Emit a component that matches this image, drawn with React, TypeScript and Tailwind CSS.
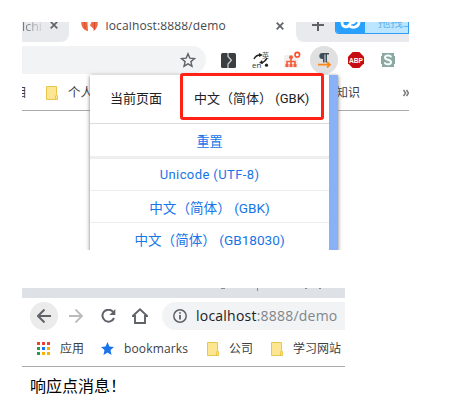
import type { ReactNode } from 'react';

const UI = "font-['Open_Sans','Noto_Sans_CJK_SC',sans-serif]";

function Folder() {
  return (
    <svg className="block shrink-0" width="12" height="14" viewBox="0 0 12 14">
      <path d="M.5.5h10v9h1v4H.5z" fill="#fee591" stroke="#e9c74e" />
      <path d="M9.5 9.5v3.5" stroke="#e9c74e" fill="none" />
    </svg>
  );
}

function Close({ className = '' }: { className?: string }) {
  return (
    <svg className={`block shrink-0 ${className}`} width="8" height="8" viewBox="0 0 8 8">
      <path d="M.7.7l6.6 6.6M7.3.7L.7 7.3" stroke="#5f6368" strokeWidth="1.7" />
    </svg>
  );
}

function TabStrip() {
  return (
    <div className="flex h-5 shrink-0 overflow-hidden bg-white">
      <div className="flex h-5 w-[47px] shrink-0 rounded-br-lg bg-[#e8eaed]">
        <span className="w-[20px] overflow-hidden whitespace-nowrap bg-linear-to-r from-[#666a70] to-[#d5d7dc] bg-clip-text text-[12.5px] leading-[9px] text-transparent">lchi</span>
        <Close className="mt-[-1px] ml-[8px]" />
      </div>
      <svg className="ml-[12px] block shrink-0" width="17" height="10" viewBox="0 0 17 10">
        <path d="M6.5 0L7 9.3Q0 7.5.2 0zM10.5 0L9 3.5l3.5 3.2.2 2.5Q17 6 16.8 0z" fill="#ed6b40" />
        <path d="M3.5 0l.7 7M13.5 0v8" stroke="#d94b2f" strokeWidth="1" />
      </svg>
      <span className="ml-[7.5px] w-[144px] shrink-0 whitespace-nowrap text-[12px] leading-[8px] tracking-[.14px] text-[#45494d]">localhost:8888/demo</span>
      <Close className="mt-0 ml-[26.5px]" />
      <div className="ml-[12px] flex h-5 flex-1 rounded-bl-lg bg-[#e8eaed]">
        <svg className="mt-[-3px] ml-[16px] block shrink-0" width="12" height="12" viewBox="0 0 12 12">
          <path d="M6 0v12M0 6h12" stroke="#5f6368" strokeWidth="2" />
        </svg>
        <div className="ml-[11px] flex h-[12px] w-[74px] overflow-hidden rounded-bl border border-t-0 border-[#2f9df4] bg-[#bce5ff]">
          <svg className="block shrink-0 bg-[#27a0ff]" width="29" height="11" viewBox="0 0 29 11">
            <path d="M6 0C6 6 12 6 14 2L15 0M13 3.5C17 7 23 5 23 0M15 0q2 2 4-1" fill="none" stroke="#fff" strokeWidth="2.8" />
          </svg>
          <span className="ml-[13px] whitespace-nowrap text-[12.5px] leading-[1px] text-[#62b5ef]">拖拽上</span>
        </div>
      </div>
    </div>
  );
}

function ExtensionBar() {
  return (
    <div className="flex h-8 shrink-0 items-end">
      <div className="flex h-7 w-[184px] shrink-0 items-center justify-end rounded-r-full bg-[#f1f3f4] pr-[10px]">
        <svg width="16" height="16" viewBox="0 0 16 16">
          <path d="M8 1.8l1.8 4.3 4.7.4-3.6 3.1 1.1 4.6L8 11.8l-4 2.4 1.1-4.6-3.6-3.1 4.7-.4z" fill="none" stroke="#5f6368" strokeWidth="1.4" />
        </svg>
      </div>
      <div className="ml-[15px] flex h-7 items-center">
        <svg className="block shrink-0" width="15" height="15" viewBox="0 0 15 15">
          <rect width="15" height="15" rx="1.5" fill="#3c3f42" />
          <path d="M7 0v3.5l3.4 3.8L7 11v4" fill="none" stroke="#c9cbcc" strokeWidth="1.3" />
        </svg>
        <svg className="ml-[16px] block shrink-0" width="18" height="18" viewBox="0 0 18 18">
          <text x="0" y="16.5" fontSize="8" fontFamily="Open Sans" fill="#333">en</text>
          <text x="10" y="7" fontSize="7" fontFamily="Noto Sans CJK SC" fill="#555">英</text>
          <path d="M2 8q2-4 6-4M9 12q4-1 6-5" fill="none" stroke="#222" strokeWidth="1.5" />
          <path d="M7 2l4 2-4 2zM10 9l-3 3 4 1z" fill="#222" />
          <circle cx="14.5" cy="14.2" r="1.6" fill="#222" />
        </svg>
        <svg className="ml-[14px] block shrink-0" width="18" height="18" viewBox="0 0 18 18">
          <rect y="4" width="14" height="13" rx="2" fill="#f2efef" />
          <circle cx="7" cy="6.2" r="2" fill="#f45d3d" />
          <path d="M7 7v7M3 14v-3.5h8V14" fill="none" stroke="#f45d3d" strokeWidth="1.6" />
          <path d="M1.5 13h3v3h-3zM5.5 13h3v3h-3zM9.5 13h3v3h-3z" fill="#f45d3d" />
          <circle cx="13.3" cy="3.7" r="2.3" fill="#fff" stroke="#ff4c27" strokeWidth="1.6" />
        </svg>
        <div className="ml-[8px] flex size-7 shrink-0 items-center justify-center rounded-full bg-[#e0e0e0]">
          <svg width="14" height="16" viewBox="0 0 14 16">
            <path d="M12 1H5.3a3 3 0 0 0 0 6H6v3.5h1.5V2.5h1v8H10v-8h2z" fill="#3e4e59" />
            <path d="M1 12.7h12M10 10l3 2.7-3 2.7" fill="none" stroke="#ff8617" strokeWidth="1.8" />
          </svg>
        </div>
        <svg className="ml-[10px] block shrink-0" width="16" height="16" viewBox="0 0 16 16">
          <path d="M4.7 0h6.6L16 4.7v6.6L11.3 16H4.7L0 11.3V4.7z" fill="#c70d12" />
          <text x="8" y="11" textAnchor="middle" textLength="14" lengthAdjust="spacingAndGlyphs" fontSize="8" fontWeight="700" fontFamily="Liberation Sans" fill="#fff">ABP</text>
        </svg>
        <svg className="ml-[17px] block shrink-0" width="14" height="14" viewBox="0 0 14 14">
          <path d="M1 0h12v3h1v8h-1v3H1v-3H0V3h1z" fill="#8ca8a3" />
          <path d="M10 4.4C9.8 2 4 1.7 4 4.5c0 3 6 1.6 6 4.7 0 3-6 2.7-6.2 0" fill="none" stroke="#f7fffd" strokeWidth="2" />
        </svg>
      </div>
    </div>
  );
}

function MenuRow({ children, className }: { children: ReactNode; className: string }) {
  return <div className={`flex shrink-0 items-center justify-center whitespace-nowrap ${className}`}>{children}</div>;
}

function EncodingMenu() {
  return (
    <div className="absolute top-[53px] left-[68px] flex h-[182px] w-[248px] bg-white font-[Roboto,'Noto_Sans_CJK_SC',sans-serif] text-[13.6px] text-[#1875e8] shadow-[0_1px_4px_#777]">
      <div className="flex w-[239px] flex-col">
        <div className="flex h-[49px] shrink-0 items-center border-b border-[#dcdcdc] pl-[20px] text-[13px] text-[#202124]">
          <span className="w-[84px] shrink-0">当前页面</span>
          <span className="whitespace-nowrap">中文（简体） (GBK)</span>
        </div>
        <MenuRow className="h-[35px] border-b-3 border-[#eee] pt-[3px] text-[13px]">重置</MenuRow>
        <MenuRow className="h-[32px] border-b border-[#eee] text-[13px] tracking-[.4px]">Unicode (UTF-8)</MenuRow>
        <MenuRow className="h-[32px] border-b border-[#eee] pt-[4px]">中文（简体） (GBK)</MenuRow>
        <MenuRow className="h-[34px]">中文（简体） (GB18030)</MenuRow>
      </div>
      <div className="w-[9px] bg-[#8ab1f7]" />
    </div>
  );
}

function MenuCapture() {
  return (
    <section className="relative flex h-[228px] w-[387px] flex-col overflow-hidden bg-white">
      <TabStrip />
      <ExtensionBar />
      <div className="flex h-[37px] shrink-0 items-center border-b border-[#aaa] pt-[2px] text-[12px] text-[#3c4043]">
        <div className="flex w-[5px] shrink-0 justify-end overflow-hidden"><span>目</span></div>
        <div className="ml-[19px]"><Folder /></div>
        <span className="ml-[10px] w-[246px] shrink-0 text-[12.5px]">个人</span>
        <span className="w-[66px] shrink-0 pl-[22px] whitespace-nowrap">知识</span>
        <svg className="ml-auto block shrink-0" width="6" height="8" viewBox="0 0 6 8">
          <path d="M.5 1l2 3-2 3M3.5 1l2 3-2 3" fill="none" stroke="#777" strokeWidth="1.5" />
        </svg>
      </div>
      <EncodingMenu />
      <div className="absolute top-[51px] left-[158px] h-[47px] w-[144px] rounded-[3px] border-3 border-[#ff2116]" />
    </section>
  );
}

const appColors = ['bg-[#ea4335]', 'bg-[#ea4335]', 'bg-[#ea4335]', 'bg-[#28994f]', 'bg-[#1a73e8]', 'bg-[#fbaf04]', 'bg-[#28994f]', 'bg-[#fbaf04]', 'bg-[#fbaf04]'];

function ResultCapture() {
  return (
    <section className="flex h-[116px] w-[323px] flex-col overflow-hidden bg-white">
      <div className="flex h-[10px] shrink-0 bg-[#dee1e6]">
        <div className="ml-[199px] h-px w-[4px] bg-[#8b8d91]" />
        <div className="ml-[32px] h-[3px] w-px bg-[#85888e]" />
        <div className="ml-[47px] h-px w-[2px] bg-[#85888e]" />
        <div className="ml-[12px] h-px w-[2px] bg-[#85888e]" />
      </div>
      <div className="flex h-[36px] shrink-0 items-center">
        <div className="ml-[8px] flex size-7 shrink-0 items-center justify-center rounded-full bg-[#ebebeb]">
          <svg width="14" height="14" viewBox="0 0 14 14"><path d="M14 7H1M7.5.5L1 7l6.5 6.5" fill="none" stroke="#5f6368" strokeWidth="2" /></svg>
        </div>
        <svg className="ml-[11px] block shrink-0" width="14" height="14" viewBox="0 0 14 14"><path d="M0 7h13M6.5.5L13 7l-6.5 6.5" fill="none" stroke="#b9bbbd" strokeWidth="1.8" /></svg>
        <svg className="ml-[18px] block shrink-0" width="15" height="14" viewBox="0 0 15 14">
          <path d="M12.2 3A6 6 0 1 0 13 9" fill="none" stroke="#5f6368" strokeWidth="2" />
          <path d="M14.3 0v6H8.4z" fill="#5f6368" />
        </svg>
        <svg className="ml-[16px] block shrink-0" width="16" height="16" viewBox="0 0 16 16"><path d="M.8 8L8 1.4 15.2 8H13v7H3V8z" fill="none" stroke="#5f6368" strokeWidth="1.9" /></svg>
        <div className="ml-[14px] flex h-7 w-[184px] shrink-0 items-center rounded-l-full bg-[#f1f3f4] pl-[11px]">
          <svg className="block shrink-0" width="14" height="14" viewBox="0 0 14 14">
            <circle cx="7" cy="7" r="6.2" fill="none" stroke="#5f6368" strokeWidth="1.5" />
            <path d="M7 6v4.6M7 3.2v1.6" stroke="#5f6368" strokeWidth="1.8" />
          </svg>
          <span className="ml-[9px] pb-px whitespace-nowrap text-[14px] tracking-[.22px] text-[#202124]">localhost<span className="text-[#80868b]">:8888/demo</span></span>
        </div>
      </div>
      <div className="flex h-[32px] shrink-0 items-center pb-[3px] text-[12px] whitespace-nowrap text-[#3c4043]">
        <div className="ml-[15px] grid shrink-0 grid-cols-[repeat(3,3px)] gap-[2px]">
          {appColors.map((color, i) => <i className={`size-[3px] ${color}`} key={i} />)}
        </div>
        <span className="ml-[10px] w-[41px] shrink-0">应用</span>
        <svg className="block shrink-0" width="13" height="13" viewBox="0 0 13 13"><path d="M6.5 0L8.4 4.5 13 5 9.5 8l1 5-4-2.5-4 2.5 1-5L0 5l4.6-.5z" fill="#1a73e8" /></svg>
        <span className="ml-[10px] w-[83px] shrink-0 tracking-[.15px]">bookmarks</span>
        <Folder />
        <span className="ml-[10px] w-[42px] shrink-0">公司</span>
        <Folder />
        <span className="ml-[10px]">学习网站</span>
      </div>
      <div className="flex h-[38px] shrink-0 items-center border-t border-[#aaa] pl-[8px] text-[16px] text-black">响应点消息！</div>
    </section>
  );
}

export default function App() {
  return (
    <main className={`flex h-[414px] w-[471px] flex-col gap-[38px] overflow-hidden bg-white pt-[22px] pl-[22px] ${UI}`}>
      <MenuCapture />
      <ResultCapture />
    </main>
  );
}
